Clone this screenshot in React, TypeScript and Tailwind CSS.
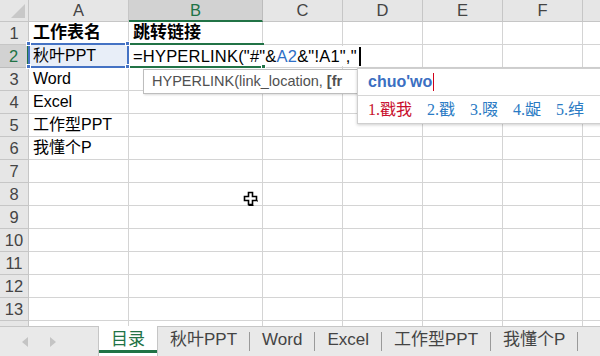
const cols = ["A", "B", "C", "D", "E", "F", ""];

const rows: Record<number, { a?: string; b?: string; bold?: boolean }> = {
  1: { a: "工作表名", b: "跳转链接", bold: true },
  3: { a: "Word" },
  4: { a: "Excel" },
  5: { a: "工作型PPT" },
  6: { a: "我懂个P" },
};

const tabs = ["秋叶PPT", "Word", "Excel", "工作型PPT", "我懂个P"];

function Corner() {
  return (
    <div className="relative bg-[#e6e6e6] border-r border-b border-[#c6c6c6]">
      <div className="absolute right-[3px] bottom-[3px] w-0 h-0 border-l-[14px] border-l-transparent border-b-[14px] border-b-[#c8c8c8]" />
    </div>
  );
}

function ColHeader({ label }: { label: string }) {
  const sel = label === "B";
  return (
    <div
      className={`flex items-center justify-center text-[16.5px] ${
        sel
          ? "bg-[#d2d2d2] text-[#217346] border-r border-[#bcbcbc] border-b-2 border-b-[#217346]"
          : "bg-[#e6e6e6] text-[#444] border-r border-b border-[#c6c6c6]"
      }`}
    >
      {label}
    </div>
  );
}

function RowHeader({ n }: { n: number }) {
  const sel = n === 2;
  return (
    <div
      className={`flex items-center justify-center text-[16.5px] ${
        sel
          ? "bg-[#d2d2d2] text-[#217346] border-b border-[#bcbcbc] border-r-2 border-r-[#217346]"
          : "bg-[#e6e6e6] text-[#444] border-r border-b border-[#c6c6c6]"
      }`}
    >
      {n < 14 ? n : null}
    </div>
  );
}

function Cell({ children, className = "" }: { children?: React.ReactNode; className?: string }) {
  return (
    <div
      className={`flex items-center pl-[4px] whitespace-nowrap border-r border-b border-[#d4d4d4] text-[16px] text-black ${className}`}
    >
      {children}
    </div>
  );
}

function Handle({ className }: { className: string }) {
  return <div className={`absolute w-[5px] h-[5px] bg-[#4472c4] border border-white ${className}`} />;
}

function MoveCursor() {
  return (
    <svg width="15" height="15" viewBox="0 0 15 15" className="absolute left-[243px] top-[191px]">
      <path
        d="M5.5 1.5h4v4h4v4h-4v4h-4v-4h-4v-4h4z"
        fill="#fff"
        stroke="#000"
        strokeWidth="1.6"
        strokeLinejoin="miter"
      />
      <path d="M10.5 14.5h-5M14.5 10.5v-1" stroke="#000" strokeWidth="1" />
    </svg>
  );
}

export default function App() {
  const body = Array.from({ length: 14 }, (_, i) => i + 1);
  return (
    <div
      className="relative w-[600px] h-[356px] overflow-hidden bg-white"
      style={{ fontFamily: '"Liberation Sans", "Noto Sans CJK SC", sans-serif' }}
    >
      <div className="h-[326px] overflow-hidden">
        <div className="grid grid-cols-[29px_100px_134px_80px_80px_80px_80px_80px] grid-rows-[22px_repeat(14,23px)]">
          <Corner />
          {cols.map((c, i) => (
            <ColHeader key={i} label={c} />
          ))}
          {body.map((n) => {
            const r = rows[n] || {};
            return [
              <RowHeader key={`h${n}`} n={n} />,
              n === 2 ? (
                <Cell key={`a${n}`} className="bg-[#e8eef8]">
                  秋叶PPT
                </Cell>
              ) : (
                <Cell key={`a${n}`} className={r.bold ? "font-bold text-[17px]" : ""}>
                  {r.a}
                </Cell>
              ),
              n === 2 ? (
                <Cell key={`b${n}`} className="relative z-10 border-r-0">
                  <span className="flex items-center bg-white h-[20px] pr-[2px] text-[16.5px] tracking-[0.2px]">
                    =HYPERLINK("#"&amp;<span className="text-[#2f6fc6]">A2</span>&amp;"!A1","
                    <span className="ml-[2px] w-[2px] h-[19px] bg-black" />
                  </span>
                </Cell>
              ) : (
                <Cell key={`b${n}`} className={r.bold ? "font-bold text-[17px]" : ""}>
                  {r.b}
                </Cell>
              ),
              ...[0, 1, 2, 3, 4].map((k) => <Cell key={`x${n}${k}`} />),
            ];
          })}
        </div>
      </div>

      {/* selection frames */}
      <div className="absolute left-[28px] top-[43px] w-[101px] h-[25px] border-2 border-[#4472c4] pointer-events-none z-20" />
      <Handle className="left-[26px] top-[41px] z-30" />
      <Handle className="left-[125px] top-[41px] z-30" />
      <Handle className="left-[26px] top-[64px] z-30" />
      <Handle className="left-[125px] top-[64px] z-30" />
      <div className="absolute left-[129px] top-[43px] w-[135px] h-[2px] bg-[#217346] z-20" />
      <div className="absolute left-[129px] top-[66px] w-[135px] h-[2px] bg-[#217346] z-20" />
      <div className="absolute left-[261px] top-[64px] w-[5px] h-[5px] bg-[#217346] border border-white z-30" />

      {/* function tooltip */}
      <div className="absolute left-[143px] top-[69px] w-[220px] h-[25px] bg-white border border-[#bdbdbd] shadow-[1px_1px_2px_rgba(0,0,0,0.15)] z-30 flex items-center pl-[8px] whitespace-nowrap overflow-hidden text-[14.5px] text-[#505050]">
        HYPERLINK(link_location, <span className="ml-[4px] font-bold">[fr</span>
      </div>

      {/* IME candidate box */}
      <div className="absolute left-[357px] top-[68px] w-[250px] h-[56px] bg-white border border-[#cfcfcf] shadow-[0_1px_3px_rgba(0,0,0,0.2)] z-40 flex flex-col">
        <div className="h-[27px] flex items-center pl-[10px] border-b border-[#d6d6d6]">
          <span className="font-bold text-[16px] text-[#3b6fc2]">chuo'wo</span>
          <span className="w-[1px] h-[18px] bg-[#d0021b] ml-[1px]" />
        </div>
        <div
          className="flex-1 flex items-center pl-[10px] gap-[15px] text-[16px] whitespace-nowrap"
          style={{ fontFamily: '"Liberation Serif", "Noto Sans CJK SC", serif' }}
        >
          <span className="text-[#c8102e]">1.戳我</span>
          <span className="text-[#2a7bc4]">2.戳</span>
          <span className="text-[#2a7bc4]">3.啜</span>
          <span className="text-[#2a7bc4]">4.龊</span>
          <span className="text-[#2a7bc4]">5.绰</span>
        </div>
      </div>

      <MoveCursor />

      {/* sheet tabs */}
      <div className="h-[30px] bg-[#e9e9e9] border-t border-[#c6c6c6] flex items-stretch">
        <div className="w-[98px] flex items-center pl-[22px] gap-[22px]">
          <svg width="6" height="10" viewBox="0 0 6 10">
            <path d="M6 0L0 5l6 5z" fill="#c4c4c4" />
          </svg>
          <svg width="6" height="10" viewBox="0 0 6 10">
            <path d="M0 0l6 5-6 5z" fill="#c4c4c4" />
          </svg>
        </div>
        <div className="w-[60px] -mt-px bg-white border-x border-[#c6c6c6] flex flex-col items-center justify-center relative text-[17px] text-[#217346]">
          <span className="-mt-[2px]">目录</span>
          <div className="absolute left-0 right-0 bottom-[3px] h-[3px] bg-[#217346]" />
        </div>
        {tabs.map((t) => (
          <div key={t} className="flex items-center">
            <span className="px-[12px] text-[17px] text-[#444] -mt-[3px]">{t}</span>
            <span className="w-px h-[19px] bg-[#9a9a9a]" />
          </div>
        ))}
      </div>
    </div>
  );
}
